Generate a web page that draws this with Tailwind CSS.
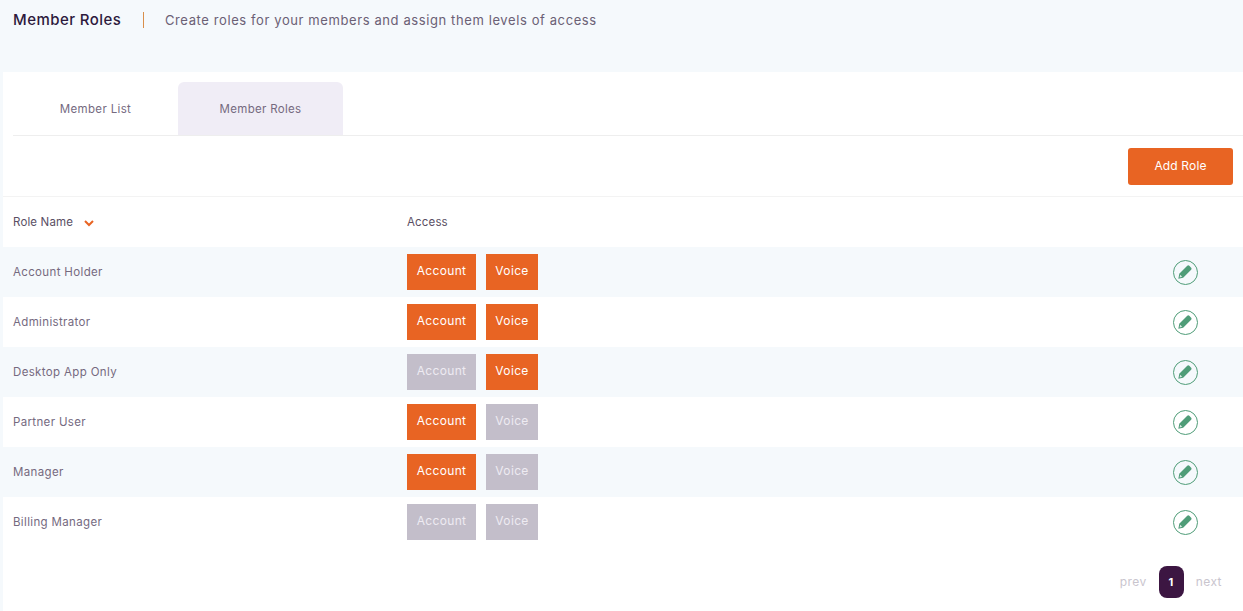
<!DOCTYPE html>
<html lang="en">
<head>
    <meta charset="UTF-8">
    <title>Member Roles</title>
    <script src="https://cdn.jsdelivr.net/npm/@tailwindcss/browser@4"></script>
</head>
<body class="h-[611px] overflow-hidden bg-[#f5f9fc] font-['Inter',sans-serif]">

    <header class="h-[72px] pl-[13px] pt-[11px] flex items-start">
        <h1 class="w-[108px] text-[15px] leading-[18px] font-medium tracking-[0.45px] whitespace-nowrap text-[#2d1a3d]">Member Roles</h1>
        <span class="ml-[22px] mt-px w-px h-4 bg-[#d98f4a]"></span>
        <p class="ml-[21px] text-[13px] leading-[18px] tracking-[0.6px] text-[#6b6075]">Create roles for your members and assign them levels of access</p>
    </header>

    <main class="ml-[3px] h-[539px] bg-white">
        <div class="pt-[10px] ml-[10px] flex h-[64px] border-b border-[#eeeeee]">
            <a class="w-[165px] h-[53px] pt-[2px] flex items-center justify-center text-[11.5px] tracking-[0.35px] text-[#756a7f]">Member List</a>
            <a class="w-[165px] h-[53px] pt-[2px] flex items-center justify-center text-[11.5px] tracking-[0.3px] text-[#756a7f] bg-[#f0edf6] rounded-t-md">Member Roles</a>
        </div>

        <div class="h-[61px] border-b border-[#f3f3f3] flex justify-end pt-3 pr-[10px]">
            <button class="w-[105px] h-[37px] pb-px rounded-[3px] bg-[#e86423] text-white text-xs tracking-[0.15px]">Add Role</button>
        </div>

        <div class="h-[50px] pt-[2px] flex items-center pl-[10px] text-[11.5px] tracking-[0.15px] text-[#5a4f64]">
            <div class="w-[394px] flex items-center">
                Role Name
                <svg class="ml-[11px] w-[10px] h-[7px]" viewBox="0 0 10 7" fill="none" stroke="#e86423" stroke-width="2"><path d="M1 1l4 4 4-4" /></svg>
            </div>
            <div>Access</div>
        </div>

        <div class="h-[50px] flex items-center pl-[10px] bg-[#f5f9fc]">
            <div class="w-[394px] pt-[2px] text-[11.5px] tracking-[0.35px] text-[#756a7f]">Account Holder</div>
            <div class="flex gap-[10px]">
                <span class="w-[69px] h-9 pb-[2px] flex items-center justify-center text-xs tracking-[0.35px] text-white bg-[#e86423]">Account</span>
                <span class="w-[52px] h-9 pb-[2px] flex items-center justify-center text-xs tracking-[0.35px] text-white bg-[#e86423]">Voice</span>
            </div>
            <button class="ml-auto mr-[45.5px] w-[25px] h-[25px] rounded-full border border-[#4f9d78] flex items-center justify-center">
                <svg class="w-4 h-4" viewBox="0 0 24 24"><path fill="#4f9d78" d="M2 22l1.4-7.2L15.4 2.8a2.2 2.2 0 0 1 3.1 0l2.7 2.7a2.2 2.2 0 0 1 0 3.1L9.2 20.6z" /><path fill="#dcebe4" d="M3.9 20.1l.9-3.9 3 3z" /></svg>
            </button>
        </div>
        <div class="h-[50px] flex items-center pl-[10px]">
            <div class="w-[394px] pt-[2px] text-[11.5px] tracking-[0.35px] text-[#756a7f]">Administrator</div>
            <div class="flex gap-[10px]">
                <span class="w-[69px] h-9 pb-[2px] flex items-center justify-center text-xs tracking-[0.35px] text-white bg-[#e86423]">Account</span>
                <span class="w-[52px] h-9 pb-[2px] flex items-center justify-center text-xs tracking-[0.35px] text-white bg-[#e86423]">Voice</span>
            </div>
            <button class="ml-auto mr-[45.5px] w-[25px] h-[25px] rounded-full border border-[#4f9d78] flex items-center justify-center">
                <svg class="w-4 h-4" viewBox="0 0 24 24"><path fill="#4f9d78" d="M2 22l1.4-7.2L15.4 2.8a2.2 2.2 0 0 1 3.1 0l2.7 2.7a2.2 2.2 0 0 1 0 3.1L9.2 20.6z" /><path fill="#dcebe4" d="M3.9 20.1l.9-3.9 3 3z" /></svg>
            </button>
        </div>
        <div class="h-[50px] flex items-center pl-[10px] bg-[#f5f9fc]">
            <div class="w-[394px] pt-[2px] text-[11.5px] tracking-[0.35px] text-[#756a7f]">Desktop App Only</div>
            <div class="flex gap-[10px]">
                <span class="w-[69px] h-9 pb-[2px] flex items-center justify-center text-xs tracking-[0.35px] text-[#eeebf2] bg-[#c3beca]">Account</span>
                <span class="w-[52px] h-9 pb-[2px] flex items-center justify-center text-xs tracking-[0.35px] text-white bg-[#e86423]">Voice</span>
            </div>
            <button class="ml-auto mr-[45.5px] w-[25px] h-[25px] rounded-full border border-[#4f9d78] flex items-center justify-center">
                <svg class="w-4 h-4" viewBox="0 0 24 24"><path fill="#4f9d78" d="M2 22l1.4-7.2L15.4 2.8a2.2 2.2 0 0 1 3.1 0l2.7 2.7a2.2 2.2 0 0 1 0 3.1L9.2 20.6z" /><path fill="#dcebe4" d="M3.9 20.1l.9-3.9 3 3z" /></svg>
            </button>
        </div>
        <div class="h-[50px] flex items-center pl-[10px]">
            <div class="w-[394px] pt-[2px] text-[11.5px] tracking-[0.35px] text-[#756a7f]">Partner User</div>
            <div class="flex gap-[10px]">
                <span class="w-[69px] h-9 pb-[2px] flex items-center justify-center text-xs tracking-[0.35px] text-white bg-[#e86423]">Account</span>
                <span class="w-[52px] h-9 pb-[2px] flex items-center justify-center text-xs tracking-[0.35px] text-[#eeebf2] bg-[#c3beca]">Voice</span>
            </div>
            <button class="ml-auto mr-[45.5px] w-[25px] h-[25px] rounded-full border border-[#4f9d78] flex items-center justify-center">
                <svg class="w-4 h-4" viewBox="0 0 24 24"><path fill="#4f9d78" d="M2 22l1.4-7.2L15.4 2.8a2.2 2.2 0 0 1 3.1 0l2.7 2.7a2.2 2.2 0 0 1 0 3.1L9.2 20.6z" /><path fill="#dcebe4" d="M3.9 20.1l.9-3.9 3 3z" /></svg>
            </button>
        </div>
        <div class="h-[50px] flex items-center pl-[10px] bg-[#f5f9fc]">
            <div class="w-[394px] pt-[2px] text-[11.5px] tracking-[0.35px] text-[#756a7f]">Manager</div>
            <div class="flex gap-[10px]">
                <span class="w-[69px] h-9 pb-[2px] flex items-center justify-center text-xs tracking-[0.35px] text-white bg-[#e86423]">Account</span>
                <span class="w-[52px] h-9 pb-[2px] flex items-center justify-center text-xs tracking-[0.35px] text-[#eeebf2] bg-[#c3beca]">Voice</span>
            </div>
            <button class="ml-auto mr-[45.5px] w-[25px] h-[25px] rounded-full border border-[#4f9d78] flex items-center justify-center">
                <svg class="w-4 h-4" viewBox="0 0 24 24"><path fill="#4f9d78" d="M2 22l1.4-7.2L15.4 2.8a2.2 2.2 0 0 1 3.1 0l2.7 2.7a2.2 2.2 0 0 1 0 3.1L9.2 20.6z" /><path fill="#dcebe4" d="M3.9 20.1l.9-3.9 3 3z" /></svg>
            </button>
        </div>
        <div class="h-[50px] flex items-center pl-[10px]">
            <div class="w-[394px] pt-[2px] text-[11.5px] tracking-[0.35px] text-[#756a7f]">Billing Manager</div>
            <div class="flex gap-[10px]">
                <span class="w-[69px] h-9 pb-[2px] flex items-center justify-center text-xs tracking-[0.35px] text-[#eeebf2] bg-[#c3beca]">Account</span>
                <span class="w-[52px] h-9 pb-[2px] flex items-center justify-center text-xs tracking-[0.35px] text-[#eeebf2] bg-[#c3beca]">Voice</span>
            </div>
            <button class="ml-auto mr-[45.5px] w-[25px] h-[25px] rounded-full border border-[#4f9d78] flex items-center justify-center">
                <svg class="w-4 h-4" viewBox="0 0 24 24"><path fill="#4f9d78" d="M2 22l1.4-7.2L15.4 2.8a2.2 2.2 0 0 1 3.1 0l2.7 2.7a2.2 2.2 0 0 1 0 3.1L9.2 20.6z" /><path fill="#dcebe4" d="M3.9 20.1l.9-3.9 3 3z" /></svg>
            </button>
        </div>

        <div class="flex justify-end items-center pt-[19px] pr-[21px] text-xs tracking-[0.45px] text-[#c9c5ce]">
            <span>prev</span>
            <span class="mx-3 w-[25px] h-8 rounded-lg bg-[#3c1642] text-white font-bold text-[11px] flex items-center justify-center">1</span>
            <span>next</span>
        </div>
    </main>

</body>
</html>
